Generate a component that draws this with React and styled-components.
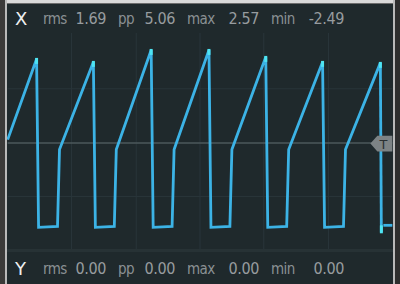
import React from 'react';
import styled, { createGlobalStyle } from 'styled-components';

const Global = createGlobalStyle`
  html, body { margin: 0; padding: 0; background: #2a2a2a; }
  body { width: 400px; height: 284px; overflow: hidden; }
`;

const Frame = styled.div`
  width: 400px;
  height: 284px;
  display: flex;
  background: #333;
`;

const SideBar = styled.div`
  width: ${p => p.w}px;
  background: ${p => p.color};
  flex-shrink: 0;
`;

const Scope = styled.div`
  flex: 1;
  display: flex;
  flex-direction: column;
  background: #1f292c;
  min-width: 0;
`;

const TopStrip = styled.div`
  height: 3px;
  background: #d9d9d9;
  border-bottom: 1px solid #6c6c6c;
`;

const StatRow = styled.div`
  height: ${p => p.h}px;
  display: flex;
  align-items: center;
  gap: 12px;
  padding-left: 8px;
  font-family: 'DejaVu Sans', sans-serif;
  font-stretch: condensed;
  font-size: 15px;
  color: #8a9093;
  border-top: ${p => (p.bottom ? '3px solid #273235' : '0')};
  box-sizing: border-box;
`;

const Axis = styled.span`
  width: 16px;
  color: #eef0f0;
  font-size: 18px;
  font-stretch: normal;
`;

const Stat = styled.div`
  width: ${p => p.w}px;
  display: flex;
  justify-content: space-between;
  align-items: baseline;
`;

const Label = styled.span`
  letter-spacing: -0.6px;
`;

const Value = styled.span`
  font-size: 16px;
  color: #979c9f;
  letter-spacing: -0.4px;
`;

const Plot = styled.svg`
  display: block;
  width: 386px;
  height: 217px;
`;

const stats = [
  { label: 'rms', w: 63 },
  { label: 'pp', w: 57 },
  { label: 'max', w: 72 },
  { label: 'min', w: 73 },
];

const Stats = ({ axis, values, h, bottom }) => (
  <StatRow h={h} bottom={bottom}>
    <Axis>{axis}</Axis>
    {stats.map((s, i) => (
      <Stat key={s.label} w={s.w}>
        <Label>{s.label}</Label>
        <Value>{values[i]}</Value>
      </Stat>
    ))}
  </StatRow>
);

// waveform in page coords, shifted into plot coords
const OX = 7;
const OY = 33;
const peaks = [
  [36, 59], [93, 62], [151, 50], [209, 50], [266, 57], [323, 62], [381, 63],
];

function wavePoints() {
  const pts = [[7, 140]];
  peaks.forEach(([x, y], i) => {
    pts.push([x, y]);
    if (i < peaks.length - 1) {
      pts.push([x + 2, 228], [x + 21, 227], [x + 23, 150]);
    }
  });
  return pts.map(([x, y]) => `${x - OX},${y - OY}`).join(' ');
}

const vGrid = [71, 136, 200, 264, 329];
const hGrid = [89, 197];

export default function App() {
  return (
    <Frame>
      <Global />
      <SideBar w={5} color="#3b3a39" />
      <SideBar w={2} color="#b9b9b9" />
      <Scope>
        <TopStrip />
        <Stats axis="X" values={['1.69', '5.06', '2.57', '-2.49']} h={29} />
        <Plot viewBox="0 0 386 217">
          {vGrid.map(x => (
            <line key={x} x1={x - OX} y1="0" x2={x - OX} y2="217" stroke="#29353a" strokeWidth="1" />
          ))}
          {hGrid.map(y => (
            <line key={y} x1="0" y1={y - OY} x2="386" y2={y - OY} stroke="#29353a" strokeWidth="1" />
          ))}
          <line x1="0" y1={143.5 - OY} x2="386" y2={143.5 - OY} stroke="#4d585b" strokeWidth="1.5" />
          <polyline
            points={wavePoints()}
            fill="none"
            stroke="#3cb3e6"
            strokeWidth="2.8"
            strokeLinejoin="miter"
          />
          <polyline
            points={`${381 - OX},${63 - OY} ${382 - OX},${233 - OY}`}
            fill="none"
            stroke="#3cb3e6"
            strokeWidth="2.8"
          />
          <line x1={384 - OX} y1={226 - OY} x2="386" y2={226 - OY} stroke="#3cb3e6" strokeWidth="2.8" />
          {peaks.map(([x, y]) => (
            <rect key={x} x={x - OX - 1.5} y={y - OY - 1} width="3" height="6" fill="#4ee4f2" />
          ))}
          <rect x={380.5 - OX} y={226 - OY} width="3" height="8" fill="#4ee4f2" />
          <path
            d={`M${371 - OX} ${144 - OY} L${378 - OX} ${136 - OY} H386 V${152 - OY} H${378 - OX} Z`}
            fill="#7d8385"
          />
          <text
            x={384 - OX}
            y={149.5 - OY}
            textAnchor="middle"
            fontFamily="DejaVu Sans, sans-serif"
            fontSize="13"
            fill="#2a2f31"
          >
            T
          </text>
        </Plot>
        <Stats axis="Y" values={['0.00', '0.00', '0.00', '0.00']} h={35} bottom />
      </Scope>
      <SideBar w={2} color="#b9b9b9" />
      <SideBar w={5} color="#2e2e2e" />
    </Frame>
  );
}
